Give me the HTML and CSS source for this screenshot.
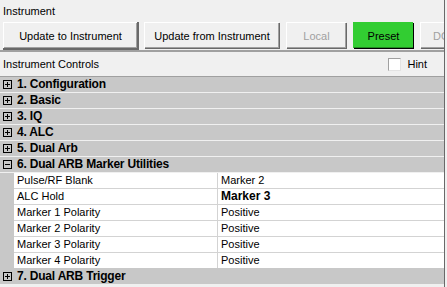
FILE: index.html
```html
<!DOCTYPE html>
<html lang="en">
<head>
    <meta charset="UTF-8">
    <title>Instrument</title>
    <link rel="stylesheet" href="styles.css">
</head>
<body>
<div class="window">
    <div class="grouplabel">Instrument</div>
    <div class="buttons">
        <button type="button" class="button wide focus">Update to Instrument</button>
        <button type="button" class="button wide">Update from Instrument</button>
        <button type="button" class="button small disabled">Local</button>
        <button type="button" class="button small green">Preset</button>
        <button type="button" class="button small disabled cut">DC</button>
    </div>
    <div class="controlsbar">
        <span class="controlslabel">Instrument Controls</span>
        <label class="hint"><span class="checkbox"></span>Hint</label>
    </div>
    <div class="grid">
        <div class="category"><svg class="expander" width="9" height="9" viewBox="0 0 9 9"><rect x="0.5" y="0.5" width="8" height="8" fill="none" stroke="#000"/><path d="M2 4.5h5M4.5 2v5" stroke="#000"/></svg>1. Configuration</div>
        <div class="category"><svg class="expander" width="9" height="9" viewBox="0 0 9 9"><rect x="0.5" y="0.5" width="8" height="8" fill="none" stroke="#000"/><path d="M2 4.5h5M4.5 2v5" stroke="#000"/></svg>2. Basic</div>
        <div class="category"><svg class="expander" width="9" height="9" viewBox="0 0 9 9"><rect x="0.5" y="0.5" width="8" height="8" fill="none" stroke="#000"/><path d="M2 4.5h5M4.5 2v5" stroke="#000"/></svg>3. IQ</div>
        <div class="category"><svg class="expander" width="9" height="9" viewBox="0 0 9 9"><rect x="0.5" y="0.5" width="8" height="8" fill="none" stroke="#000"/><path d="M2 4.5h5M4.5 2v5" stroke="#000"/></svg>4. ALC</div>
        <div class="category"><svg class="expander" width="9" height="9" viewBox="0 0 9 9"><rect x="0.5" y="0.5" width="8" height="8" fill="none" stroke="#000"/><path d="M2 4.5h5M4.5 2v5" stroke="#000"/></svg>5. Dual Arb</div>
        <div class="category"><svg class="expander" width="9" height="9" viewBox="0 0 9 9"><rect x="0.5" y="0.5" width="8" height="8" fill="none" stroke="#000"/><path d="M2 4.5h5" stroke="#000"/></svg>6. Dual ARB Marker Utilities</div>
        <div class="prop"><span class="name">Pulse/RF Blank</span><span class="value">Marker 2</span></div>
        <div class="prop"><span class="name">ALC Hold</span><span class="value bold">Marker 3</span></div>
        <div class="prop"><span class="name">Marker 1 Polarity</span><span class="value">Positive</span></div>
        <div class="prop"><span class="name">Marker 2 Polarity</span><span class="value">Positive</span></div>
        <div class="prop"><span class="name">Marker 3 Polarity</span><span class="value">Positive</span></div>
        <div class="prop last"><span class="name">Marker 4 Polarity</span><span class="value">Positive</span></div>
        <div class="category"><svg class="expander" width="9" height="9" viewBox="0 0 9 9"><rect x="0.5" y="0.5" width="8" height="8" fill="none" stroke="#000"/><path d="M2 4.5h5M4.5 2v5" stroke="#000"/></svg>7. Dual ARB Trigger</div>
    </div>
</div>
</body>
</html>
```
FILE: styles.css
```css
html {
    background: #f0f0f0;
}
body {
    margin: 0;
    font-family: "Liberation Sans", Arial, sans-serif;
    font-size: 11px;
    color: black;
    overflow: hidden;
}
.window {
    width: 444px;
    height: 287px;
    border-right: 1px solid #696969;
    overflow: hidden;
}
.grouplabel {
    height: 22px;
    line-height: 22px;
    padding-left: 3px;
}
.buttons {
    display: flex;
    gap: 7px;
    padding-left: 3px;
    height: 28px;
    white-space: nowrap;
}
.button {
    box-sizing: border-box;
    height: 26px;
    padding: 0;
    margin: 0;
    font-family: inherit;
    font-size: 11px;
    color: black;
    background: #f0f0f0;
    border: none;
    border-top: 1px solid #fff;
    border-left: 1px solid #fff;
    box-shadow: inset -1px -1px 0 #a0a0a0, 1px 1px 0 #696969;
    flex-shrink: 0;
    text-align: center;
}
.button.focus {
    box-shadow: inset -1px -1px 0 #a0a0a0, 1px 1px 0 #696969, 1px 1px 0 1px #696969;
}
.button.wide {
    width: 134px;
}
.button.wide + .button.wide {
    width: 135px;
}
.button.small {
    width: 60px;
}
.button.disabled {
    color: #a0a0a0;
}
.button.cut {
    text-align: left;
    padding-left: 12px;
}
.button.green {
    background: #32cd32;
    border-color: #32cd32;
    box-shadow: 1px 1px 0 #000, inset 0 -1px 0 #228b22;
}
.controlsbar {
    border-top: 2px solid #a0a0a0;
    border-bottom: 1px solid #a0a0a0;
    height: 24px;
    display: flex;
    align-items: center;
    padding-left: 3px;
}
.controlslabel {
    flex: 1;
}
.hint {
    display: flex;
    align-items: center;
    gap: 6px;
    margin-right: 17px;
}
.checkbox {
    width: 11px;
    height: 11px;
    background: white;
    border: 1px solid #a0a0a0;
    border-right-color: #e3e3e3;
    border-bottom-color: #e3e3e3;
}
.grid {
    background: #c8c8c8;
}
.category {
    height: 15px;
    border-bottom: 1px solid #f0f0f0;
    font-weight: bold;
    font-size: 12px;
    line-height: 15px;
    display: flex;
    align-items: center;
    letter-spacing: -0.2px;
}
.expander {
    margin: 0 5px 0 3px;
    flex-shrink: 0;
}
.prop {
    display: flex;
    height: 15px;
    line-height: 15px;
    margin-left: 14px;
    background: white;
    border-bottom: 1px solid #d3d3d3;
}
.prop.last {
    border-bottom-color: #c8c8c8;
}
.name {
    width: 200px;
    padding-left: 3px;
    border-right: 1px solid #d3d3d3;
}
.value {
    padding-left: 3px;
}
.value.bold {
    font-weight: bold;
    font-size: 12px;
}
```
